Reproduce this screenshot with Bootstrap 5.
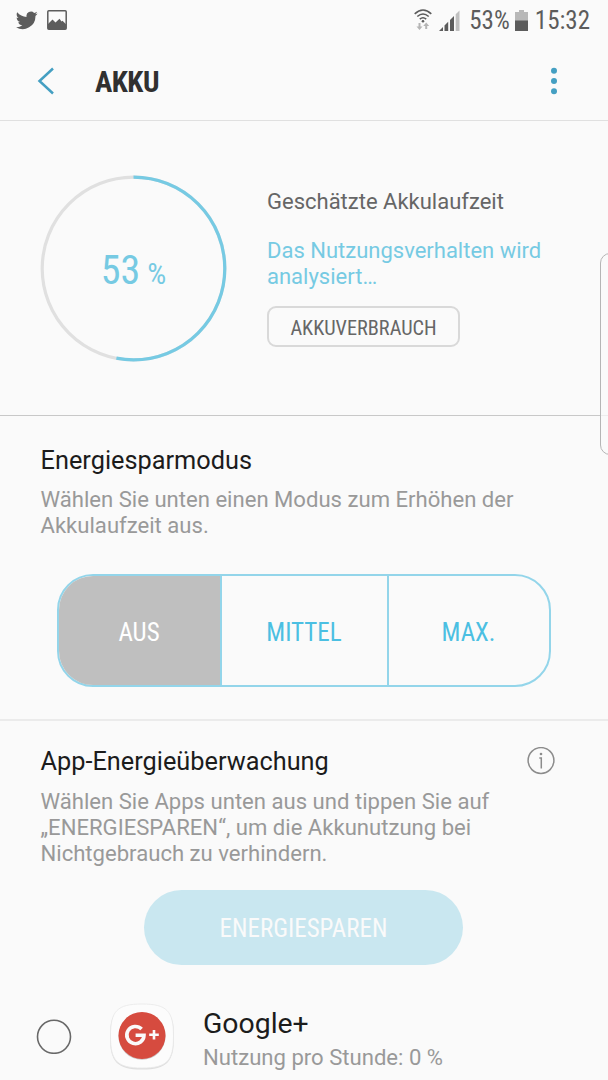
<!DOCTYPE html>
<html lang="de">
<head>
<meta charset="utf-8">
<meta name="viewport" content="width=device-width, initial-scale=1">
<title>Akku</title>
<link href="https://cdn.jsdelivr.net/npm/bootstrap@5.3.0/dist/css/bootstrap.min.css" rel="stylesheet">
<style>
body{background:#fafafa;color:#1c1c1c;font-family:Roboto,sans-serif;font-size:22px;line-height:26px;height:1080px;overflow:hidden}
.condensed{font-family:"Roboto Condensed",Roboto,sans-serif;font-stretch:75%;white-space:nowrap}
svg{display:block;flex:none}
.status{height:40px;padding:0 18px 0 16px;color:#5c5c5c;font-size:25px;line-height:40px}
.status span{padding-top:2px}
.appbar{height:81px;padding:2px 40px 0 37px;border-bottom:1px solid #e0e0e0}
.appbar h1{font-size:29px;letter-spacing:-.5px;font-weight:700;color:#303030;margin:0 0 0 40px;padding-top:1px;line-height:34px}
.battery{height:295px;padding:54px 40px 0;border-bottom:1px solid #c8c8c8}
.dial{width:187px;height:187px}
.dial-text{color:#76cae3;line-height:48px;padding-top:9px}
.dial-text .num{font-size:40px}
.dial-text .pct{font-size:30px;margin-left:7px}
.estimate{margin:14px 0 0 40px}
.soft-blue{color:#76cae3}
.usage{width:193px;height:41px;border:2px solid #d9d9d9;border-radius:9px;font-size:20.3px;color:#666;padding:2px 0 0;line-height:37px;margin-top:16px}
.saving{height:305px;padding:30px 40px 0;border-bottom:2px solid #ebebeb}
h2{font-size:25.3px;line-height:30px;margin:0;color:#1c1c1c;font-weight:400;padding-left:.6px}
.note{font-size:22.1px;color:#999;margin:10px 0 0;padding-left:.5px}
.modes{width:494px;height:113px;margin:36px 0 0 17px;border:2px solid #93d5ea;border-radius:36px;overflow:hidden}
.modes .btn{border:0;border-radius:0;font-size:25px;color:#4bbfe2;padding:4px 1px 0 0}
.modes .btn+.btn{border-left:2px solid #93d5ea}
.modes .off{background:#bfbfbf;color:#fff}
.monitor{padding:26px 40px 0}
.monitor .note{margin-top:11px}
.save{width:319px;height:75px;border:0;border-radius:38px;background:#c9e7f0;color:#fafafa;font-size:25px;margin:24px 0 0 104px;padding:3px 0 0}
.app{margin:37px 0 0 -4px}
.app-name{font-size:28.4px;line-height:34px}
.edge{left:600px;top:253px;width:20px;height:202px;border:1px solid #b5b5b5;border-radius:12px;background:rgba(250,250,250,.75)}
</style>
</head>
<body>
<header>
<div class="status condensed d-flex align-items-center">
<svg width="22" height="19" viewBox="0 0 24 20" fill="#5c5c5c"><path d="M23.600 2.400c-.9.400-1.800.6-2.800.8 1-.6 1.800-1.600 2.100-2.700-.9.600-2 1-3.100 1.200A4.900 4.900 0 0 0 11.500 6.100C7.400 5.900 3.800 3.900 1.400.9.100 3.100.700 6 2.900 7.400c-.8 0-1.500-.2-2.200-.6 0 2.400 1.600 4.400 3.900 4.900-.7.200-1.500.2-2.200.1.600 1.900 2.400 3.300 4.500 3.400A9.800 9.800 0 0 1 0 17.300 13.900 13.900 0 0 0 21.200 5c1-.7 1.800-1.600 2.400-2.600z"/></svg>
<svg class="me-auto" style="margin-left:9px" width="20" height="20" viewBox="0 0 20 20"><rect x=".8" y=".8" width="18.400" height="18.400" rx="1" fill="none" stroke="#5c5c5c" stroke-width="1.500"/><path d="M1 14l4.500-4.500L8.500 12.500l4-3.700 2 2.700 1-.7 3.500 3.500V19H1z" fill="#5c5c5c"/></svg>
<svg width="18" height="22" viewBox="0 0 18 22" fill="none" stroke="#5c5c5c" stroke-width="1.600"><path d="M.7 4.800Q9-2.800 17.300 4.800M3.300 7.500q5.700-5 11.400 0M5.800 10.200q3.200-2.900 6.400 0"/><circle cx="9" cy="12.200" r="1.300" fill="#5c5c5c" stroke="none"/><g fill="#b5b5b5" stroke="none"><path d="M4.500 14h2v3.500h2L5.500 21l-3-3.500h2zM11.200 20h2v-3h2l-3-3.500-3 3.500h2z"/></g></svg>
<svg style="margin-left:7px" width="21" height="21" viewBox="0 0 21 21" fill="#5c5c5c"><path d="M0 21l4-4v4zM5.500 15.500l3.700-3.700V21H5.500zM11 10l4-4v15h-4z"/><path d="M16.700 4.300L20.500.5V21h-3.800z" fill="#c0c0c0"/></svg>
<span style="margin-left:9px">53%</span>
<svg style="margin-left:5px" width="13" height="21" viewBox="0 0 13 21"><path d="M4 0h5v2h4v9H0V2h4z" fill="#b8b8b8"/><path d="M0 10.500h13V21H0z" fill="#5c5c5c"/></svg>
<span style="margin-left:7px">15:32</span>
</div>
<nav class="appbar d-flex align-items-center">
<svg width="18" height="28" viewBox="0 0 18 28"><path d="M16 1.500L2.500 14 16 26.500" fill="none" stroke="#449fc2" stroke-width="2.500"/></svg>
<h1 class="condensed">AKKU</h1>
<svg class="ms-auto" style="margin-right:11px" width="6" height="28" viewBox="0 0 6 28" fill="#449fc2"><circle cx="3" cy="3.700" r="3"/><circle cx="3" cy="14" r="3"/><circle cx="3" cy="24.300" r="3"/></svg>
</nav>
</header>
<main>
<section class="battery d-flex align-items-start">
<div class="dial position-relative flex-shrink-0">
<svg width="187" height="187" viewBox="0 0 187 187" fill="none" stroke-width="3.200"><circle cx="93.500" cy="93.500" r="91.300" stroke="#e0e0e0"/><circle cx="93.500" cy="93.500" r="91.300" stroke="#76cae3" pathLength="100" stroke-dasharray="53 47" transform="rotate(-90 93.500 93.500)"/></svg>
<div class="dial-text condensed position-absolute top-50 start-50 translate-middle"><span class="num">53</span><span class="pct">%</span></div>
</div>
<div class="estimate">
<div style="color:#666">Geschätzte Akkulaufzeit</div>
<div class="soft-blue" style="margin-top:23px">Das Nutzungsverhalten wird<br>analysiert…</div>
<button class="btn usage condensed">AKKUVERBRAUCH</button>
</div>
</section>
<section class="saving">
<h2>Energiesparmodus</h2>
<p class="note">Wählen Sie unten einen Modus zum Erhöhen der<br>Akkulaufzeit aus.</p>
<div class="modes d-flex condensed">
<button class="btn off" style="width:161px">AUS</button>
<button class="btn" style="width:167px">MITTEL</button>
<button class="btn flex-fill">MAX.</button>
</div>
</section>
<section class="monitor">
<div class="d-flex align-items-center justify-content-between"><h2>App-Energieüberwachung</h2>
<svg style="margin:-3px 13px 0 0" width="28" height="28" viewBox="0 0 28 28" fill="none" stroke="#8c8c8c" stroke-width="1.500"><circle cx="14" cy="13.500" r="12.900"/><path d="M12.300 11h2V21.500"/><circle cx="14" cy="7" r="1.300" fill="#8c8c8c" stroke="none"/></svg></div>
<p class="note">Wählen Sie Apps unten aus und tippen Sie auf<br>„ENERGIESPAREN“, um die Akkunutzung bei<br>Nichtgebrauch zu verhindern.</p>
<button class="btn save condensed">ENERGIESPAREN</button>
<div class="app d-flex align-items-center">
<svg width="36" height="36" viewBox="0 0 36 36"><circle cx="18" cy="18.800" r="16.500" fill="none" stroke="#686868" stroke-width="1.600"/></svg>
<svg style="margin-left:36px" width="68" height="68" viewBox="0 0 68 68"><path d="M34 3C59 3 66 10 66 35S59 67.500 34 67.500 2 60 2 35 9 3 34 3z" fill="#dedede"/><path d="M34 2C59 2 65.500 9 65.500 34S59 66 34 66 2.500 59 2.500 34 9 2 34 2z" fill="#fcfcfc" stroke="#e8e8e8" stroke-width=".8"/><circle cx="34" cy="34.300" r="23.500" fill="#c9c4c4"/><circle cx="34" cy="33.500" r="23.500" fill="#d64b3f"/><path d="M33.600 27.100A8.600 8.600 0 1 0 36 33.200H27.600" fill="none" stroke="#fafafa" stroke-width="3.600"/><path d="M46 28v9.600M41.200 32.800h9.600" stroke="#fafafa" stroke-width="2.600"/></svg>
<div style="margin-left:27px;padding-top:5px"><div class="app-name">Google+</div><div style="color:#999;font-size:22.1px;margin-top:3px">Nutzung pro Stunde: 0 %</div></div>
</div>
</section>
</main>
<div class="edge position-absolute"></div>
<script src="https://cdn.jsdelivr.net/npm/bootstrap@5.3.0/dist/js/bootstrap.bundle.min.js"></script>
</body>
</html>
